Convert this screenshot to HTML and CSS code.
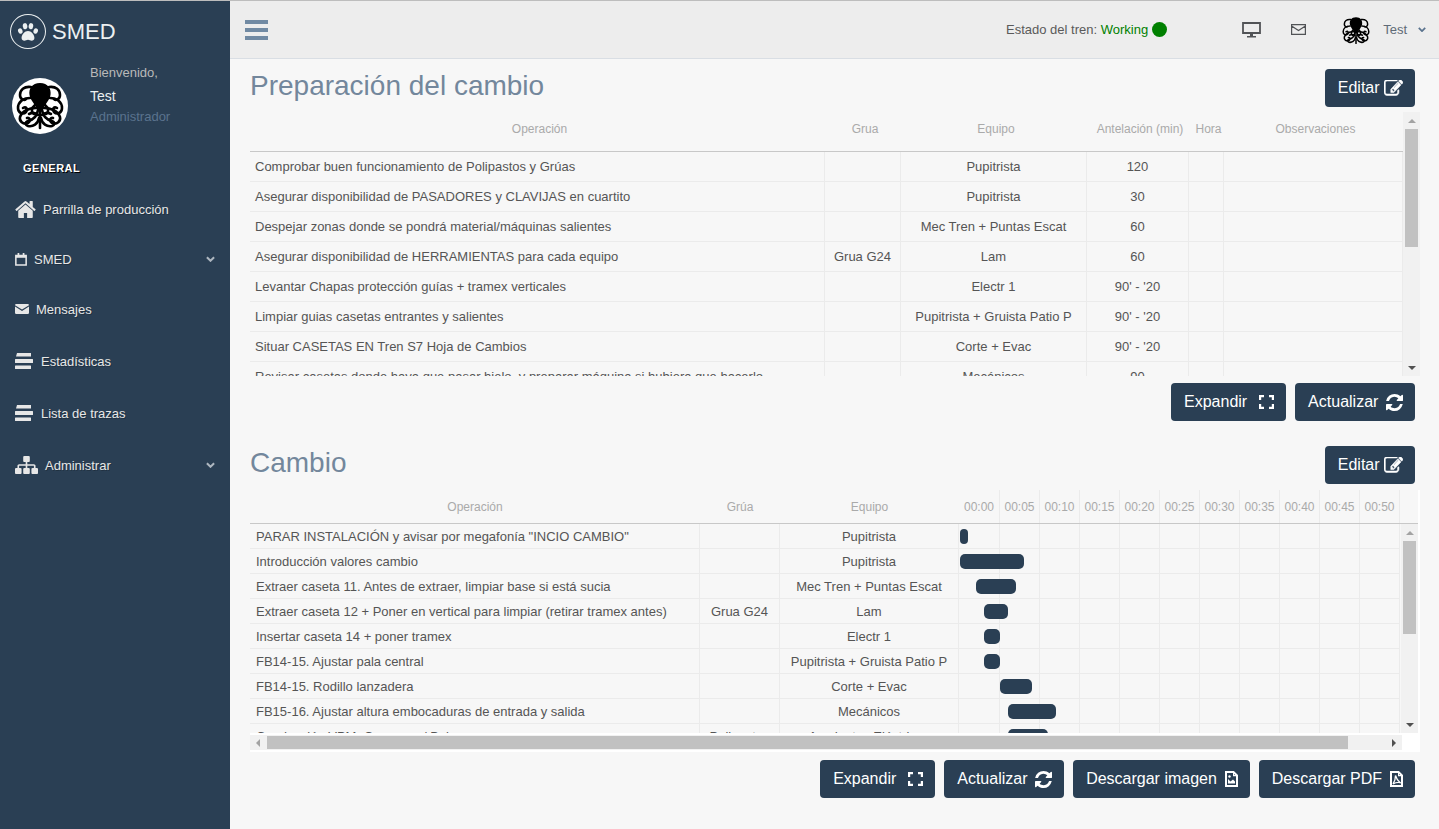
FILE: index.html
```html
<!DOCTYPE html>
<html lang="es">
<head>
<meta charset="utf-8">
<title>SMED</title>
<link rel="stylesheet" href="styles.css">
</head>
<body>
<svg class="defs" aria-hidden="true">
  <symbol id="octo" viewBox="0 0 56 56">
    <path d="M28 5c8 0 11.500 6 10.500 12-1 6-6 9-7.500 15h-6c-1.500-6-6.500-9-7.500-15C16.500 11 20 5 28 5z" fill="#000"/>
    <g fill="none" stroke="#000" stroke-width="2.600" stroke-linecap="round">
      <path d="M19 9c-7-1-11 3-11 8 0 4 4 6 6 4"/>
      <path d="M37 9c7-1 11 3 11 8 0 4-4 6-6 4"/>
      <path d="M18 20c-7 0-12 4-12 10 0 5 5 7 8 4 2-3 0-6-3-4"/>
      <path d="M38 20c7 0 12 4 12 10 0 5-5 7-8 4-2-3 0-6 3-4"/>
      <path d="M23 27c-4 3-4 7-1 9"/>
      <path d="M33 27c4 3 4 7 1 9"/>
      <path d="M24 30c-7 0-14 3-16 9-1 4 3 8 8 6 3-2 2-6-1-5"/>
      <path d="M32 30c7 0 14 3 16 9 1 4-3 8-8 6-3-2-2-6 1-5"/>
      <path d="M26 32c-1 6-5 10-10 11-3 1-3 4 0 5 5 1 10-2 11-8"/>
      <path d="M30 32c1 6 5 10 10 11 3 1 3 4 0 5-5 1-10-2-11-8"/>
      <path d="M28 32v18"/>
      <path d="M17 36c4-2 7-1 9 1"/>
      <path d="M39 36c-4-2-7-1-9 1"/>
    </g>
  </symbol>
  <symbol id="i-home" viewBox="0 250 1664 1290" preserveAspectRatio="none"><path fill="currentColor" d="M1408 992v480q0 26-19 45t-45 19h-384v-384h-256v384h-384q-26 0-45-19t-19-45v-480q0-1 .5-3t.5-3l575-474 575 474q1 2 1 6zm223-69l-62 74q-8 9-21 11h-3q-13 0-21-7l-692-577-692 577q-12 8-24 7-13-2-21-11l-62-74q-8-10-7-23.500t11-21.500l719-599q32-26 76-26t76 26l244 204v-195q0-14 9-23t23-9h192q14 0 23 9t9 23v408l219 182q10 8 11 21.500t-7 23.500z"/></symbol>
  <symbol id="i-sitemap" viewBox="0 128 1792 1536" preserveAspectRatio="none"><path fill="currentColor" d="M1792 1248v320q0 40-28 68t-68 28h-320q-40 0-68-28t-28-68v-320q0-40 28-68t68-28h96v-192h-512v192h96q40 0 68 28t28 68v320q0 40-28 68t-68 28h-320q-40 0-68-28t-28-68v-320q0-40 28-68t68-28h96v-192h-512v192h96q40 0 68 28t28 68v320q0 40-28 68t-68 28h-320q-40 0-68-28t-28-68v-320q0-40 28-68t68-28h96v-192q0-52 38-90t90-38h512v-192h-96q-40 0-68-28t-28-68v-320q0-40 28-68t68-28h320q40 0 68 28t28 68v320q0 40-28 68t-68 28h-96v192h512q52 0 90 38t38 90v192h96q40 0 68 28t28 68z"/></symbol>
  <symbol id="i-edit" viewBox="0 170 1792 1500" preserveAspectRatio="none"><path fill="currentColor" stroke="currentColor" stroke-width="50" d="M888 1184l116-116-152-152-116 116v56h96v96h56zm440-720q-16-16-33 1l-350 350q-17 17-1 33t33-1l350-350q17-17 1-33zm80 594v190q0 119-84.500 203.500t-203.500 84.500h-832q-119 0-203.500-84.500t-84.500-203.500v-832q0-119 84.500-203.500t203.500-84.500h832q63 0 117 25 15 7 18 23 3 17-9 29l-49 49q-14 14-32 8-23-6-45-6h-832q-66 0-113 47t-47 113v832q0 66 47 113t113 47h832q66 0 113-47t47-113v-126q0-13 9-22l64-64q15-15 35-7t20 29zm-96-738l288 288-672 672h-288v-288zm444 132l-92 92-288-288 92-92q28-28 68-28t68 28l152 152q28 28 28 68t-28 68z"/></symbol>
  <symbol id="i-refresh" viewBox="128 128 1536 1536"><path fill="currentColor" d="M1639 1056q0 5-1 7-64 268-268 434.500t-478 166.500q-146 0-282.500-55t-243.500-157l-129 129q-19 19-45 19t-45-19-19-45v-448q0-26 19-45t45-19h448q26 0 45 19t19 45-19 45l-137 137q71 66 161 102t187 36q134 0 250-65t186-179q11-17 53-117 8-23 30-23h192q13 0 22.500 9.500t9.500 22.500zm25-800v448q0 26-19 45t-45 19h-448q-26 0-45-19t-19-45 19-45l138-138q-148-137-349-137-134 0-250 65t-186 179q-11 17-53 117-8 23-30 23h-199q-13 0-22.500-9.500t-9.500-22.500v-7q65-268 270-434.500t480-166.500q146 0 284 55.500t245 156.500l130-129q19-19 45-19t45 19 19 45z"/></symbol>
  <symbol id="i-expand" viewBox="0 0 15 14"><path fill="none" stroke="currentColor" stroke-width="2.200" d="M1.100 5V1.100H5M10 1.100h3.900V5M13.900 9v3.900H10M5 12.900H1.100V9"/></symbol>
  <symbol id="i-paw" viewBox="0 0 24 24"><g fill="currentColor"><ellipse cx="3.600" cy="11" rx="2.400" ry="3" transform="rotate(-20 3.600 11)"/><ellipse cx="8.800" cy="5.600" rx="2.500" ry="3.300" transform="rotate(-8 8.800 5.600)"/><ellipse cx="15.200" cy="5.600" rx="2.500" ry="3.300" transform="rotate(8 15.200 5.600)"/><ellipse cx="20.400" cy="11" rx="2.400" ry="3" transform="rotate(20 20.400 11)"/><path d="M12 11c-3.500 0-7 4-7 7.500 0 2 1.500 3 3 3s2.500-1 4-1 2.500 1 4 1 3-1 3-3c0-3.500-3.500-7.500-7-7.500z"/></g></symbol>
  <symbol id="i-file-img" viewBox="0 0 13 16"><path fill="none" stroke="currentColor" stroke-width="2" d="M1 1h7.500L12 4.500V15H1z"/><path fill="currentColor" d="M8 1h1v3h3v1.200H8zM3 12.500V8l2.500 2.500L8 8.500l2 2v2z"/><circle cx="4.500" cy="5.500" r="1.200" fill="currentColor"/></symbol>
  <symbol id="i-file-pdf" viewBox="0 0 13 16"><path fill="none" stroke="currentColor" stroke-width="2" d="M1 1h7.500L12 4.500V15H1z"/><path fill="currentColor" d="M8 1h1v3h3v1.200H8z"/><path fill="none" stroke="currentColor" stroke-width="1.300" d="M5.500 4.500c1 3.500 2 5 4.500 7-2.500-.3-4.500 0-7 1.500 1.500-2 2.500-4.500 2.500-8.500z"/></symbol>
</svg>

<div class="app">
  <aside class="sidebar">
    <div class="brand">
      <span class="brand-circle"><svg class="brand-paw"><use href="#i-paw"/></svg></span>
      <span class="brand-name">SMED</span>
    </div>
    <div class="profile">
      <svg class="avatar"><use href="#octo"/></svg>
      <div class="profile-text">
        <span class="welcome">Bienvenido,</span>
        <span class="uname">Test</span>
        <span class="role">Administrador</span>
      </div>
    </div>
    <h3 class="menu-title">GENERAL</h3>
    <nav class="menu">
      <a class="menu-item item-home"><svg class="ic ic-home"><use href="#i-home"/></svg>Parrilla de producción</a>
      <a class="menu-item item-smed">
        <svg class="ic ic-cal" viewBox="0 0 14 15"><path fill="currentColor" d="M3 0h2v3H3zM9 0h2v3H9z"/><path fill="none" stroke="currentColor" stroke-width="1.800" d="M1 3h12v11H1z"/><path fill="currentColor" d="M1 3h12v2.500H1z"/></svg>SMED
        <svg class="chev" viewBox="0 0 10 6"><path fill="none" stroke="currentColor" stroke-width="2.200" d="M1 1l4 4 4-4"/></svg>
      </a>
      <a class="menu-item item-msg">
        <svg class="ic ic-env" viewBox="0 0 14 10"><path fill="currentColor" d="M0 1.200A1.200 1.200 0 0 1 1.200 0h11.600A1.200 1.200 0 0 1 14 1.200L7 5.500 0 1.200zM0 2.600l7 4.400 7-4.400v6.200a1.200 1.200 0 0 1-1.200 1.200H1.200A1.200 1.200 0 0 1 0 8.800z"/></svg>Mensajes
      </a>
      <a class="menu-item item-bars item-first-bars">
        <svg class="ic ic-bars" viewBox="0 0 18 16"><path fill="currentColor" d="M2 0h14v3.500H1zM.5 6h17a.5.5 0 0 1 .5.5v3a.5.5 0 0 1-.5.5H.5a.5.5 0 0 1-.5-.5v-3A.5.5 0 0 1 .5 6zM.5 12.500h15a.5.5 0 0 1 .5.5v2.500a.5.5 0 0 1-.5.500H.5a.5.5 0 0 1-.5-.5V13a.5.5 0 0 1 .5-.5z"/></svg>Estadísticas
      </a>
      <a class="menu-item item-bars">
        <svg class="ic ic-bars" viewBox="0 0 18 16"><path fill="currentColor" d="M2 0h14v3.500H1zM.5 6h17a.5.5 0 0 1 .5.5v3a.5.5 0 0 1-.5.5H.5a.5.5 0 0 1-.5-.5v-3A.5.5 0 0 1 .5 6zM.5 12.500h15a.5.5 0 0 1 .5.5v2.500a.5.5 0 0 1-.5.500H.5a.5.5 0 0 1-.5-.5V13a.5.5 0 0 1 .5-.5z"/></svg>Lista de trazas
      </a>
      <a class="menu-item item-admin"><svg class="ic ic-site"><use href="#i-sitemap"/></svg>Administrar
        <svg class="chev" viewBox="0 0 10 6"><path fill="none" stroke="currentColor" stroke-width="2.200" d="M1 1l4 4 4-4"/></svg>
      </a>
    </nav>
  </aside>

  <div class="content">
    <header class="topbar">
      <svg class="burger" viewBox="0 0 23 20"><path fill="#718aa3" d="M0 0h23v4H0zM0 8h23v4H0zM0 16h23v4H0z"/></svg>
      <div class="status">Estado del tren: <span class="working">Working</span><span class="dot"></span></div>
      <svg class="top-desktop" viewBox="0 0 19 16"><path fill="none" stroke="#515356" stroke-width="1.800" d="M1 1h17v10H1z"/><path fill="#515356" d="M8 11h3v3H8zM5 14h9v1.500H5z"/></svg>
      <svg class="top-env" viewBox="0 0 15 11"><path fill="none" stroke="#515356" stroke-width="1.200" d="M.6.600h13.800v9.800H.6zM.6 2l6.900 4.500L14.400 2"/></svg>
      <svg class="top-avatar" viewBox="5 3 46 48"><use href="#octo" width="56" height="56"/></svg>
      <span class="top-user">Test</span>
      <svg class="top-chev" viewBox="0 0 10 6"><path fill="none" stroke="#5a738e" stroke-width="2.200" d="M1 1l4 4 4-4"/></svg>
    </header>

    <main class="main">
      <section class="panel panel-prep">
        <div class="panel-head">
          <h2 class="title">Preparación del cambio</h2>
          <button class="btn">Editar <svg class="bi bi-edit"><use href="#i-edit"/></svg></button>
        </div>
        <div class="tbl-wrap tbl-wrap-prep">
          <div class="viewport">
            <table class="tbl tbl-prep">
              <colgroup><col class="p1"><col class="p2"><col class="p3"><col class="p4"><col class="p5"><col class="p6"></colgroup>
              <thead><tr><th>Operación</th><th>Grua</th><th>Equipo</th><th>Antelación (min)</th><th>Hora</th><th>Observaciones</th></tr></thead>
              <tbody>
                <tr><td class="l">Comprobar buen funcionamiento de Polipastos y Grúas</td><td></td><td>Pupitrista</td><td>120</td><td></td><td></td></tr>
                <tr><td class="l">Asegurar disponibilidad de PASADORES y CLAVIJAS en cuartito</td><td></td><td>Pupitrista</td><td>30</td><td></td><td></td></tr>
                <tr><td class="l">Despejar zonas donde se pondrá material/máquinas salientes</td><td></td><td>Mec Tren + Puntas Escat</td><td>60</td><td></td><td></td></tr>
                <tr><td class="l">Asegurar disponibilidad de HERRAMIENTAS para cada equipo</td><td>Grua G24</td><td>Lam</td><td>60</td><td></td><td></td></tr>
                <tr><td class="l">Levantar Chapas protección guías + tramex verticales</td><td></td><td>Electr 1</td><td>90' - '20</td><td></td><td></td></tr>
                <tr><td class="l">Limpiar guias casetas entrantes y salientes</td><td></td><td>Pupitrista + Gruista Patio P</td><td>90' - '20</td><td></td><td></td></tr>
                <tr><td class="l">Situar CASETAS EN Tren S7 Hoja de Cambios</td><td></td><td>Corte + Evac</td><td>90' - '20</td><td></td><td></td></tr>
                <tr><td class="l">Revisar casetas donde haya que pasar hielo, y preparar máquina si hubiera que hacerlo</td><td></td><td>Mecánicos</td><td>90</td><td></td><td></td></tr>
              </tbody>
            </table>
          </div>
          <div class="vscroll">
            <span class="arr arr-up"></span>
            <div class="vtrack"><span class="vthumb vthumb-prep"></span></div>
            <span class="arr arr-down"></span>
          </div>
        </div>
        <div class="actions">
          <button class="btn">Expandir <svg class="bi bi-expand"><use href="#i-expand"/></svg></button>
          <button class="btn">Actualizar <svg class="bi bi-ref"><use href="#i-refresh"/></svg></button>
        </div>
      </section>

      <section class="panel panel-gantt">
        <div class="panel-head">
          <h2 class="title">Cambio</h2>
          <button class="btn">Editar <svg class="bi bi-edit"><use href="#i-edit"/></svg></button>
        </div>
        <div class="gantt-box">
          <div class="gantt-head-row">
            <table class="tbl tbl-gantt">
              <colgroup><col class="g1"><col class="g2"><col class="g3"><col class="gt0"><col class="gt"><col class="gt"><col class="gt"><col class="gt"><col class="gt"><col class="gt"><col class="gt"><col class="gt"><col class="gt"><col class="gt"></colgroup>
              <thead><tr><th>Operación</th><th>Grúa</th><th>Equipo</th><th>00:00</th><th>00:05</th><th>00:10</th><th>00:15</th><th>00:20</th><th>00:25</th><th>00:30</th><th>00:35</th><th>00:40</th><th>00:45</th><th>00:50</th></tr></thead>
            </table>
          </div>
          <div class="gantt-body-row">
            <div class="viewport">
              <table class="tbl tbl-gantt">
                <colgroup><col class="g1"><col class="g2"><col class="g3"><col class="gt0"><col class="gt"><col class="gt"><col class="gt"><col class="gt"><col class="gt"><col class="gt"><col class="gt"><col class="gt"><col class="gt"><col class="gt"></colgroup>
                <tbody id="gantt-rows"></tbody>
              </table>
            </div>
            <div class="vscroll">
              <span class="arr arr-up"></span>
              <div class="vtrack"><span class="vthumb vthumb-gantt"></span></div>
              <span class="arr arr-down"></span>
            </div>
          </div>
          <div class="hscroll">
            <span class="arr arr-left"></span>
            <div class="htrack"><span class="hthumb"></span></div>
            <span class="arr arr-right"></span>
          </div>
        </div>
        <div class="actions actions-gantt">
          <button class="btn">Expandir <svg class="bi bi-expand"><use href="#i-expand"/></svg></button>
          <button class="btn">Actualizar <svg class="bi bi-ref"><use href="#i-refresh"/></svg></button>
          <button class="btn">Descargar imagen <svg class="bi bi-file"><use href="#i-file-img"/></svg></button>
          <button class="btn">Descargar PDF <svg class="bi bi-file"><use href="#i-file-pdf"/></svg></button>
        </div>
      </section>
    </main>
  </div>
</div>
<script src="gantt.js"></script>
</body>
</html>
```
FILE: gantt.js
```js
var rows = [
  ['PARAR INSTALACIÓN y avisar por megafonía "INCIO CAMBIO"', '', 'Pupitrista', 1, 8],
  ['Introducción valores cambio', '', 'Pupitrista', 1, 64],
  ['Extraer caseta 11. Antes de extraer, limpiar base si está sucia', '', 'Mec Tren + Puntas Escat', 17, 40],
  ['Extraer caseta 12 + Poner en vertical para limpiar (retirar tramex antes)', 'Grua G24', 'Lam', 25, 24],
  ['Insertar caseta 14 + poner tramex', '', 'Electr 1', 25, 16],
  ['FB14-15. Ajustar pala central', '', 'Pupitrista + Gruista Patio P', 25, 16],
  ['FB14-15. Rodillo lanzadera', '', 'Corte + Evac', 41, 32],
  ['FB15-16. Ajustar altura embocaduras de entrada y salida', '', 'Mecánicos', 49, 48],
  ['Conducción VPM, Consumo / Bolas', 'Polipastos', 'Ayudantes Eléctricos', 49, 40]
];
var body = document.getElementById('gantt-rows');
rows.forEach(function (r) {
  var tr = document.createElement('tr');
  [r[0], r[1], r[2]].forEach(function (text, i) {
    var td = document.createElement('td');
    td.textContent = text;
    if (i === 0) td.className = 'l';
    tr.appendChild(td);
  });
  for (var i = 0; i < 11; i++) {
    var cell = document.createElement('td');
    if (i === 0) {
      cell.className = 'bar-host';
      var bar = document.createElement('span');
      bar.className = 'bar';
      bar.style.left = r[3] + 'px';
      bar.style.width = r[4] + 'px';
      cell.appendChild(bar);
    }
    tr.appendChild(cell);
  }
  body.appendChild(tr);
});
```
FILE: styles.css
```css
* { box-sizing: border-box; }
html, body { margin: 0; height: 100%; overflow: hidden; }
body {
  font-family: "Liberation Sans", Arial, sans-serif;
  font-size: 13px;
  color: #5a5a5a;
  background: #f7f7f7;
}
.defs { position: absolute; width: 0; height: 0; }
.app { display: flex; height: 829px; border-top: 1px solid #bdbdbd; }

/* sidebar */
.sidebar { width: 230px; flex: none; background: #2a3f54; color: #e7e7e7; }
.brand { display: flex; align-items: center; height: 60px; padding: 3px 0 0 10px; gap: 6px; color: #ecf0f1; margin-top: -1px; }
.brand-circle { width: 36px; height: 35px; border: 1px solid #ecf0f1; border-radius: 50%; display: flex; align-items: center; justify-content: center; }
.brand-paw { width: 22px; height: 22px; }
.brand-name { font-size: 22px; line-height: 1; }
.profile { display: flex; padding: 3px 0 0 12px; height: 101px; }
.avatar { width: 56px; height: 56px; background: #fff; border-radius: 50%; margin-top: 15px; flex: none; }
.profile-text { display: flex; flex-direction: column; margin-left: 22px; padding-top: 1px; }
.welcome { font-size: 13px; color: #b9b9b9; line-height: 18px; }
.uname { font-size: 14px; color: #ecf0f1; line-height: 18px; margin-top: 5px; }
.role { font-size: 13px; color: #5a738e; line-height: 18px; margin-top: 3px; }
.menu-title { margin: 0; padding: 0 0 0 23px; font-size: 11px; font-weight: bold; letter-spacing: .5px; color: #fff; line-height: 14px; text-shadow: 1px 1px #000; }
.menu { display: flex; flex-direction: column; margin-top: 9px; }
.menu-item { display: flex; align-items: center; height: 52px; padding-left: 15px; font-size: 13px; color: #e7e7e7; text-shadow: 1px 1px rgba(0,0,0,.25); position: relative; }
.item-home, .item-smed, .item-msg { height: 50px; }
.item-first-bars { margin-top: 1px; }
.ic { flex: none; color: #e7e7e7; }
.ic-home { width: 21px; height: 17px; margin-right: 7px; }
.ic-cal { width: 12px; height: 13px; margin-right: 7px; }
.ic-env { width: 14px; height: 10px; margin-right: 7px; }
.ic-bars { width: 18px; height: 16px; margin-right: 8px; }
.ic-site { width: 23px; height: 18px; margin-right: 7px; }
.chev { width: 9px; height: 6px; position: absolute; left: 206px; top: 50%; margin-top: -3px; color: #aeb7c0; }

/* top */
.content { flex: 1; min-width: 0; display: flex; flex-direction: column; }
.topbar { height: 58px; flex: none; background: #ededed; border-bottom: 1px solid #d9dee4; display: flex; align-items: center; padding-left: 15px; }
.burger { width: 23px; height: 20px; }
.status { margin-left: auto; font-size: 13px; color: #5a5a5a; display: flex; align-items: center; white-space: pre; }
.working { color: #008000; }
.dot { width: 15px; height: 15px; border-radius: 50%; background: #008000; margin-left: 4px; }
.top-desktop { width: 19px; height: 16px; margin-left: 75px; }
.top-env { width: 15px; height: 11px; margin-left: 30px; }
.top-avatar { width: 28px; height: 28px; margin-left: 36px; }
.top-user { margin-left: 13px; font-size: 13px; color: #5f6b77; }
.top-chev { width: 8px; height: 5px; margin-left: 11px; margin-right: 13px; }

/* main */
.main { flex: 1; padding: 0 24px 0 20px; display: flex; flex-direction: column; min-height: 0; }
.panel-head { display: flex; justify-content: space-between; align-items: flex-start; }
.panel-prep .panel-head { padding-top: 10px; height: 53px; }
.panel-gantt { margin-top: 25px; }
.panel-gantt .panel-head { height: 44px; }
.title { margin: 0; font-size: 28px; font-weight: 400; line-height: 34px; color: #73879c; }
.btn { height: 38px; border: 0; border-radius: 4px; background: #2a3f54; color: #fff; font: 16px "Liberation Sans", Arial, sans-serif; padding: 0 12px 0 13px; display: inline-flex; align-items: center; white-space: pre; }
.bi { flex: none; }
.bi-edit { width: 19px; height: 17px; }
.bi-expand { width: 15px; height: 14px; margin-left: 7.500px; }
.bi-ref { width: 17px; height: 17px; margin-left: 3.200px; }
.bi-file { width: 13px; height: 16px; margin-left: 3.500px; }
.actions { display: flex; justify-content: flex-end; gap: 9px; margin-top: 7px; }

/* tables */
.tbl { border-collapse: separate; border-spacing: 0; table-layout: fixed; font-size: 13px; color: #555; }
.tbl th { font-weight: 400; color: #aaa; font-size: 12px; text-align: center; padding: 0; white-space: nowrap; overflow: hidden; }
.tbl td { text-align: center; padding: 0; border-bottom: 1px solid #ebebeb; border-right: 1px solid #ebebeb; white-space: nowrap; overflow: hidden; }
.tbl td.l { text-align: left; padding-left: 5px; }
.viewport { overflow: hidden; flex: none; background: #f7f7f7; }

.tbl-wrap-prep { display: flex; height: 264px; width: 1170px; }
.tbl-wrap-prep .viewport { width: 1153px; }
.tbl-prep { width: 1153px; }
.tbl-prep th { height: 40px; padding: 0 0 6px 4px; border-bottom: 1px solid #c8c8c8; }
.tbl-prep td { height: 30px; }
.p1 { width: 575px; } .p2 { width: 76px; } .p3 { width: 186px; } .p4 { width: 102px; } .p5 { width: 35px; } .p6 { width: 179px; }

.gantt-box { width: 1170px; background: #fff; border-bottom: 2px solid #fff; border-right: 2px solid #fff; height: 262px; display: flex; flex-direction: column; }
.gantt-head-row { height: 34px; overflow: hidden; flex: none; background: #f7f7f7; border-bottom: 1px solid #c8c8c8; }
.gantt-body-row { display: flex; height: 209px; flex: none; }
.gantt-body-row .viewport { width: 1151px; }
.tbl-gantt { width: 1150px; }
.tbl-gantt th { height: 33px; border-right: 1px solid #ebebeb; }
.tbl-gantt th:nth-child(-n+3) { border-right: 0; }
.tbl-gantt td { height: 25px; }
.tbl-gantt td.l { padding-left: 6px; }
.g1 { width: 450px; } .g2 { width: 80px; } .g3 { width: 179px; } .gt0 { width: 41px; } .gt { width: 40px; }
.bar-host { position: relative; overflow: visible !important; }
.bar { position: absolute; top: 5px; height: 15px; background: #2a3f54; border-radius: 5px; z-index: 2; }
.tbl-gantt td { overflow: visible; }
.tbl-gantt td.l, .tbl-gantt td:nth-child(2), .tbl-gantt td:nth-child(3) { overflow: hidden; }

/* scrollbars */
.vscroll { width: 17px; flex: none; background: #f1f1f1; display: flex; flex-direction: column; align-items: center; }
.vtrack { flex: 1; width: 13px; }
.vthumb { display: block; width: 100%; height: 93px; background: #c1c1c1; }
.vthumb-prep { height: 118px; }
.arr { flex: none; width: 0; height: 0; border-style: solid; border-color: transparent; }
.arr-up { border-width: 0 4px 4px; border-bottom-color: #a3a3a3; margin: 7px 0 6px; }
.arr-down { border-width: 4px 4px 0; border-top-color: #505050; margin: 5px 0 6px; }
.hscroll { height: 15px; margin: 2px 16px 0 0; display: flex; align-items: center; background: #f1f1f1; flex: none; }
.htrack { flex: 1; height: 13px; margin: 0 2px 0 7px; }
.hthumb { display: block; height: 100%; width: 1081px; background: #c1c1c1; }
.arr-left { border-width: 4px 4px 4px 0; border-right-color: #a3a3a3; margin-left: 6px; }
.arr-right { border-width: 4px 0 4px 4px; border-left-color: #505050; margin-right: 6px; }
.actions-gantt { margin-top: 8px; }
```
